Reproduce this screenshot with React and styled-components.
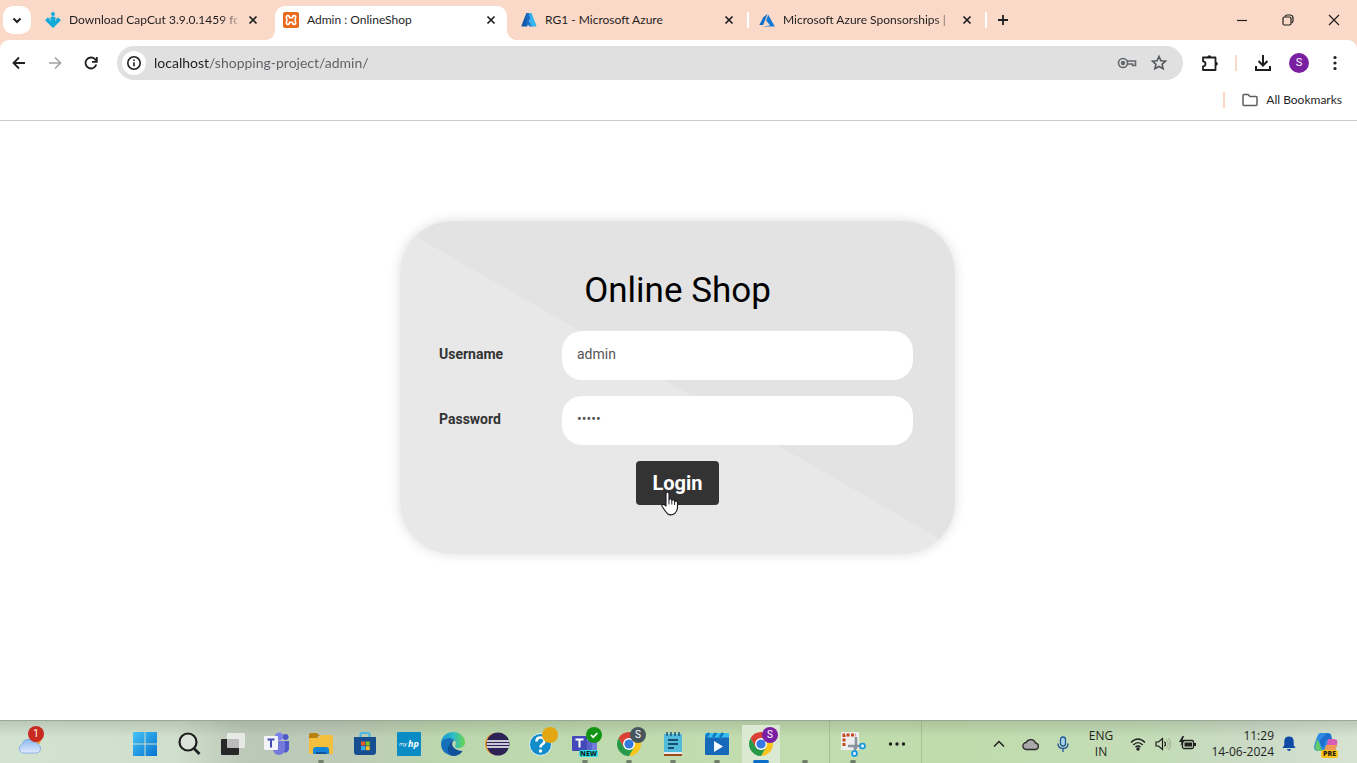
import React from "react";
import styled, { createGlobalStyle, css } from "styled-components";

const PEACH = "#fbd9c8";
const INK = "#1f1f1f";

const GlobalStyle = createGlobalStyle`
  *, *::before, *::after { box-sizing: border-box; }
  body { margin: 0; background: #fff; font-family: "Open Sans", "Liberation Sans", sans-serif; color: ${INK}; }
  button, input { font: inherit; color: inherit; margin: 0; }
  button { border: 0; padding: 0; background: none; cursor: pointer; }
  svg { display: block; flex: none; }
`;

const Screen = styled.div`
  display: flex;
  flex-direction: column;
  min-height: 100vh;
`;

/* ---------- browser tabs ---------- */

const BrowserHeader = styled.header`
  background: ${PEACH};
  font-family: Lato, "Open Sans", sans-serif;
`;

const TabStrip = styled.div`
  display: flex;
  align-items: flex-end;
  height: 40px;
  padding-left: 3px;
`;

const TabSearch = styled.button`
  display: grid;
  place-items: center;
  width: 28px;
  height: 28px;
  margin: 0 3px 6px 0;
  border-radius: 10px;
  background: #fff;
`;

const Tab = styled.div`
  position: relative;
  display: flex;
  align-items: center;
  gap: 8px;
  flex: 0 1 238px;
  min-width: 0;
  height: 34px;
  padding: 0 11px 6px;
  isolation: isolate;

  ${(p) =>
    p.$divided &&
    css`
      &::after {
        content: "";
        position: absolute;
        left: -1px;
        top: 6px;
        width: 2px;
        height: 16px;
        background: #fff;
      }
    `}

  ${(p) =>
    p.$active &&
    css`
      &::before {
        content: "";
        position: absolute;
        z-index: -1;
        inset: 0 -7px;
        background:
          radial-gradient(circle at 0 0, transparent 10px, #fff 10px) left bottom / 10px 10px no-repeat,
          radial-gradient(circle at 100% 0, transparent 10px, #fff 10px) right bottom / 10px 10px no-repeat;
      }
      &::after {
        content: "";
        position: absolute;
        z-index: -1;
        inset: 0 3px;
        border-radius: 10px 10px 0 0;
        background: #fff;
      }
    `}
`;

const TabTitle = styled.span`
  flex: 1;
  min-width: 0;
  overflow: hidden;
  white-space: nowrap;
  font-size: 12px;
  line-height: 16px;
  ${(p) => p.$fade && css`mask-image: linear-gradient(to right, #000 90%, rgba(0, 0, 0, 0.3));`}
`;

const TabClose = styled.button`
  display: grid;
  place-items: center;
  width: 16px;
  height: 16px;
`;

const NewTab = styled.button`
  position: relative;
  display: grid;
  place-items: center;
  width: 34px;
  height: 34px;
  padding-bottom: 6px;
  &::before {
    content: "";
    position: absolute;
    left: -1px;
    top: 6px;
    width: 2px;
    height: 16px;
    background: #fff;
  }
`;

const WindowControls = styled.div`
  display: flex;
  margin-left: auto;
`;

const WindowButton = styled.button`
  display: grid;
  place-items: center;
  width: 46px;
  height: 40px;
`;

/* ---------- toolbar ---------- */

const Toolbar = styled.div`
  display: flex;
  align-items: center;
  gap: 6px;
  padding: 6px 7px 0 4px;
  border-radius: 9px 9px 0 0;
  background: #fff;
`;

const ToolButton = styled.button`
  display: grid;
  place-items: center;
  width: 30px;
  height: 30px;
`;

const AddressBar = styled.div`
  display: flex;
  align-items: center;
  flex: 1;
  min-width: 0;
  height: 34px;
  margin: 0 6px 0 5px;
  padding: 0 8px 0 5px;
  border-radius: 17px;
  background: #e0e0e0;
`;

const SiteInfo = styled.button`
  display: grid;
  place-items: center;
  width: 24px;
  height: 24px;
  margin-right: 8px;
  border-radius: 50%;
  background: #fff;
`;

const AddressInput = styled.input`
  flex: 1;
  min-width: 0;
  height: 24px;
  padding: 0;
  border: 0;
  outline: 0;
  font-size: 14px;
  line-height: 24px;
  color: transparent;
  caret-color: ${INK};
  background: linear-gradient(to right, #1f1f1f 56px, #5a5e63 56px);
  background-clip: text;
`;

const AddressButton = styled.button`
  display: grid;
  place-items: center;
  width: 32px;
  height: 30px;
`;

const Divider = styled.span`
  flex: none;
  width: 2px;
  height: 16px;
  margin: 0 5px 0 4px;
  background: ${PEACH};
`;

const Avatar = styled.span`
  display: grid;
  place-items: center;
  width: 20px;
  height: 20px;
  border-radius: 50%;
  background: #7b1fa2;
  color: #fff;
  font: 11px/20px Roboto, sans-serif;
`;

const BookmarksBar = styled.div`
  display: flex;
  justify-content: flex-end;
  align-items: center;
  gap: 12px;
  height: 41px;
  padding-right: 15px;
  border-bottom: 1px solid #c9c9c9;
  background: #fff;
`;

const BookmarkButton = styled.button`
  display: flex;
  align-items: center;
  gap: 8px;
  font-size: 12px;
  line-height: 16px;
`;

/* ---------- login page ---------- */

const Page = styled.main`
  flex: 1;
  padding: 100px 18px 60px 16px;
  font-family: Roboto, "Liberation Sans", sans-serif;
`;

const LoginCard = styled.section`
  max-width: 555px;
  margin: 0 auto;
  padding: 49px 0;
  border-radius: 52px;
  background: linear-gradient(30deg, #e8e8e8 50%, #e3e3e3 50%);
  box-shadow: 0 0 12px rgba(0, 0, 0, 0.14);
`;

const CardTitle = styled.h1`
  margin: 0 0 20px;
  font-size: 35px;
  font-weight: 400;
  line-height: 41px;
  text-align: center;
  color: #000;
`;

const LoginForm = styled.form`
  display: flex;
  flex-direction: column;
  gap: 16px;
`;

const Field = styled.div`
  display: flex;
  align-items: center;
  padding: 0 42px 0 39px;
`;

const FieldLabel = styled.label`
  flex: none;
  width: 123px;
  padding-bottom: 4px;
  font-size: 14px;
  font-weight: 700;
  color: #333;
`;

const FieldInput = styled.input`
  flex: 1;
  min-width: 0;
  height: 49px;
  padding: 0 15px 4px;
  border: 0;
  border-radius: 20px;
  outline: 0;
  background: #fff;
  font-size: 14px;
  color: #555;
`;

const LoginButton = styled.button`
  position: relative;
  align-self: center;
  height: 44px;
  padding: 0 16px;
  border-radius: 4px;
  background: #333;
  color: #fff;
  font-size: 20px;
  font-weight: 700;
`;

const Pointer = styled.svg`
  position: absolute;
  left: 25px;
  top: 30px;
`;

/* ---------- taskbar ---------- */

const Taskbar = styled.footer`
  display: flex;
  align-items: stretch;
  height: 43px;
  border-top: 1px solid #9aa897;
  background:
    linear-gradient(to bottom, rgba(90, 100, 85, 0.2), transparent 16px),
    linear-gradient(to right, #d3e3d1 0, #d0dfcb 13%, #bcc8b8 18%, #bccbb6 26%, #bcd7ad 33%, #c2dcb0 52%, #c0dcac 70%, #c4dcb8 86%, #cbdbc6 92%, #d6e3d1 100%);
`;

const Weather = styled.button`
  display: grid;
  place-items: center;
  width: 60px;
  margin-right: 63px;
`;

const WeatherFace = styled.span`
  position: relative;
  display: block;
`;

const AppList = styled.nav`
  display: flex;
`;

const AppButton = styled.button`
  position: relative;
  display: grid;
  place-items: center;
  width: 44px;
  padding-top: 4px;
  ${(p) =>
    p.$active &&
    css`
      background: linear-gradient(#dce9d2, #dce9d2) center 4px / 38px 38px no-repeat;
    `}
  ${(p) =>
    (p.$running || p.$active) &&
    css`
      &::after {
        content: "";
        position: absolute;
        bottom: 0;
        left: 50%;
        width: ${p.$active ? 16 : 6}px;
        height: 3px;
        border-radius: 2px;
        transform: translateX(-50%);
        background: ${p.$active ? "#0b6fc9" : "#71806c"};
      }
    `}
`;

const Badge = styled.span`
  position: absolute;
  top: 6px;
  right: 5px;
  display: grid;
  place-items: center;
  width: 16px;
  height: 16px;
  border-radius: 50%;
  background: ${(p) => p.$color};
  color: #fff;
  font: 10px/16px Roboto, sans-serif;
`;

const WeatherBadge = styled(Badge)`
  top: -4px;
  right: -1px;
`;

const NewLabel = styled.span`
  position: absolute;
  right: 9px;
  bottom: 6px;
  padding: 0 1px;
  border-radius: 2px;
  background: #2ce0e6;
  color: #06282b;
  font: 900 7px/7px "Open Sans", sans-serif;
`;

const TaskDivider = styled.span`
  width: 1px;
  margin: 0 1px 0 2px;
  background: rgba(120, 140, 110, 0.35);
`;

const Tray = styled.div`
  display: flex;
  align-items: stretch;
  margin-left: auto;
  padding: 4px 9px 0 0;
  font-size: 12px;
  line-height: 16px;
`;

const TrayButton = styled.button`
  position: relative;
  display: grid;
  place-items: center;
  align-content: center;
  width: ${(p) => p.$width || 32}px;
`;

const Clock = styled(TrayButton)`
  justify-items: end;
  margin-left: 7px;
`;

const PreLabel = styled.span`
  position: absolute;
  right: 10px;
  bottom: 5px;
  padding: 0 2px;
  border-radius: 2px;
  background: #fbc21a;
  color: #2b2410;
  font: 800 7px/8px "Open Sans", sans-serif;
`;

/* ---------- icons ---------- */

const Line = ({ size = 16, box = size, w = 2, color = INK, children, ...rest }) => (
  <svg width={size} height={size} viewBox={`0 0 ${box} ${box}`} fill="none" stroke={color} strokeWidth={w} {...rest}>
    {children}
  </svg>
);

const CloseIcon = () => (
  <Line size={16} w={1.7}><path d="M4.5 4.5l7 7M11.5 4.5l-7 7" /></Line>
);

const CapCutSiteIcon = () => (
  <svg width="16" height="16" viewBox="0 0 16 16" fill="#11aadb">
    <circle cx="8" cy="2" r="2" />
    <path d="M5.500 5.200l2.500-1 2.500 1v4l2.700-2.700L16 8.300 8 16 0 8.300l2.800-1.800 2.700 2.700z" />
    <circle cx="3" cy="7.500" r="1.800" /><circle cx="13" cy="7.500" r="1.800" />
  </svg>
);

const XamppIcon = () => (
  <svg width="16" height="16" viewBox="0 0 16 16">
    <rect width="16" height="16" rx="2" fill="#ea6a1c" />
    <path d="M5 3.600c-1.500 0-2 1-1.600 2.200L4 8l-.6 2.200C3 11.500 3.500 12.400 5 12.400s1.600-1 1.600-2.200h2.800c0 1.200.1 2.200 1.600 2.200s2-.9 1.600-2.200L12 8l.6-2.200c.4-1.200-.1-2.200-1.600-2.200S9.400 4.600 9.400 5.800H6.600C6.600 4.600 6.500 3.600 5 3.600z" fill="none" stroke="#fff" strokeWidth="1.600" />
  </svg>
);

const AzureIcon = () => (
  <svg width="16" height="16" viewBox="0 0 16 16">
    <path d="M5.400 1h4.400L5.200 14.600H1.200c-.6 0-.9-.5-.7-1z" fill="#1158a7" />
    <path d="M4.300 9.800h7l1 4.800H8.600z" fill="#0f78d4" />
    <path d="M6.300 1h4.200l4.900 12.600c.2.500-.2 1-.7 1h-4.300L8 7.500z" fill="#36b4ee" />
    <path d="M5.400 1h2.200l1.600 5-2.900 8.600H5z" fill="#1b6cc4" />
  </svg>
);

const AzureClassicIcon = () => (
  <svg width="16" height="16" viewBox="0 0 16 16">
    <path d="M8.600 1.700L4.400 5.200.3 12.900h3.800z" fill="#0a6ccb" />
    <path d="M9.200 2.700L7.100 8.500l4 5L3.300 14.500h12.500z" fill="#1279d6" />
  </svg>
);

const PuzzleIcon = () => (
  <svg width="18" height="18" viewBox="0 0 18 18">
    <path d="M2 3.500h12.500V16H2v-3.700a2.400 2.400 0 0 0 0-5z" fill="none" stroke={INK} strokeWidth="1.800" strokeLinejoin="round" />
    <path d="M6.300 3.300a2 2 0 0 1 4 0zM14.800 7.800a2 2 0 0 1 0 4z" fill={INK} />
  </svg>
);

const ChromeIcon = () => (
  <svg width="24" height="24" viewBox="0 0 24 24">
    <path d="M12 6h10.390A12 12 0 0 1 12 24l5.200-9z" fill="#f9c51d" />
    <path d="M6.800 15L1.610 6A12 12 0 0 0 12 24l5.200-9z" fill="#269a49" />
    <path d="M12 6h10.390A12 12 0 0 0 1.610 6L6.800 15z" fill="#dc3f34" />
    <circle cx="12" cy="12" r="6" fill="#fff" />
    <circle cx="12" cy="12" r="4.600" fill="#3478e0" />
  </svg>
);

const WindowsIcon = () => (
  <svg width="24" height="24" viewBox="0 0 24 24">
    <defs>
      <linearGradient id="win" x1="0" y1="0" x2="1" y2="1">
        <stop offset="0" stopColor="#45c3f7" />
        <stop offset="1" stopColor="#0673d0" />
      </linearGradient>
    </defs>
    <path d="M0 0h11.500v11.500H0zM12.500 0H24v11.500H12.500zM0 12.500h11.500V24H0zM12.500 12.500H24V24H12.500z" fill="url(#win)" />
  </svg>
);

const SearchIcon = () => (
  <Line size={24} w={2.200}><circle cx="11" cy="10" r="8.500" fill="#e4e9e2" fillOpacity=".6" /><path d="M17 16.500l5.500 5.500" strokeWidth="2.600" /></Line>
);

const TaskViewIcon = () => (
  <svg width="24" height="24" viewBox="0 0 24 24">
    <rect x="0" y="7" width="18" height="16" rx="1" fill="#272727" />
    <rect x="6" y="1" width="18" height="15" rx="1" fill="#f5f5f5" fillOpacity=".72" />
  </svg>
);

const TeamsIcon = () => (
  <svg width="26" height="24" viewBox="0 0 26 24">
    <circle cx="21.500" cy="5" r="3" fill="#5059c9" />
    <circle cx="15" cy="4.500" r="4" fill="#7b83eb" />
    <path d="M17 9h8v8a4 4 0 0 1-6 3z" fill="#5059c9" />
    <path d="M9 9h12v8a6 6 0 0 1-12 0z" fill="#7479dc" />
    <rect x="0" y="4" width="14" height="14" rx="1" fill="#f3f3fa" />
    <path d="M3.500 7.500h7M7 7.500v8" stroke="#444bb8" strokeWidth="2" />
  </svg>
);

const TeamsNewIcon = () => (
  <svg width="26" height="24" viewBox="0 0 26 24">
    <path d="M10 8h15v8a6 6 0 0 1-10 5z" fill="#7479dc" />
    <path d="M9 9h11v8a6 6 0 0 1-11 2z" fill="#5a60cc" />
    <rect x="0" y="4" width="15" height="15" rx="1" fill="#444bb8" />
    <path d="M3.500 7.500h8M7.500 7.500v8" stroke="#fff" strokeWidth="2" />
  </svg>
);

const FolderIcon = () => (
  <svg width="26" height="24" viewBox="0 0 26 24">
    <path d="M1 2.500Q1 1 2.500 1H9l3 3h-2l-1 4H1z" fill="#b8810e" />
    <path d="M1 6h9l3-3h11q1 0 1 1.500V22H1z" fill="#f3bf3c" />
    <path d="M5 22v-4q0-3 3-3h10q3 0 3 3v4z" fill="#1684d6" />
    <path d="M8 22v-2h10v2z" fill="#0b559d" />
  </svg>
);

const StoreIcon = () => (
  <svg width="24" height="24" viewBox="0 0 24 24">
    <path d="M7.500 7V2.500Q7.500 1 9 1h6q1.500 0 1.500 1.500V7" fill="none" stroke="#49b8e5" strokeWidth="2" />
    <path d="M1 5h22v15q0 3-3 3H4q-3 0-3-3z" fill="#164e8f" />
    <path d="M8 9.500h4v4H8z" fill="#ef5a2c" /><path d="M12.700 9.500h4v4h-4z" fill="#86c423" />
    <path d="M8 14.200h4v4H8z" fill="#35b3ee" /><path d="M12.700 14.200h4v4h-4z" fill="#fbc123" />
  </svg>
);

const MyHpIcon = () => (
  <svg width="24" height="24" viewBox="0 0 24 24">
    <rect width="24" height="24" rx="1" fill="#098cc4" />
    <text x="2" y="14" fontSize="6" fontStyle="italic" fontFamily="Open Sans, sans-serif" fill="#fff">my</text>
    <text x="11" y="15" fontSize="9" fontWeight="700" fontStyle="italic" fontFamily="Open Sans, sans-serif" fill="#fff">hp</text>
  </svg>
);

const EdgeIcon = () => (
  <svg width="24" height="24" viewBox="0 0 24 24">
    <defs>
      <linearGradient id="edgeTop" x1="0" x2="1">
        <stop offset="0" stopColor="#1695da" />
        <stop offset=".55" stopColor="#31bfc1" />
        <stop offset="1" stopColor="#67d34c" />
      </linearGradient>
    </defs>
    <path d="M0 12C0 5 5 0 12 0s12 5 12 10c0 4-3 6-6 6-4 0-4.500-1.800-3.500-3C16 10 13 6 8.500 6 4 6 1 9 0 12z" fill="url(#edgeTop)" />
    <path d="M0 12c1-4 4-6 8.500-6 2 0 4.500 1 5.500 3-4-1-6 1.500-6 4.500 0 5 6 8 13.500 5.500A12 12 0 0 1 0 12z" fill="#1470bd" />
    <path d="M8 13.500C8 10.500 10 8.500 12.500 9c-3 2-1.500 9.500 9 10-3 5-9 5.500-11.500 4.500C7 21 5.500 17 8 13.500z" fill="#12509a" />
  </svg>
);

const EclipseIcon = () => (
  <svg width="26" height="24" viewBox="0 0 26 24">
    <circle cx="12" cy="12" r="11" fill="#ef9a2b" />
    <circle cx="14" cy="12" r="11.500" fill="#2c2255" />
    <path d="M3 9h22M3 12h22M3 15h22" stroke="#fff" strokeWidth="1.700" />
  </svg>
);

const HelpIcon = () => (
  <svg width="26" height="24" viewBox="0 0 26 24">
    <circle cx="12.500" cy="12.500" r="11" fill="#118dc9" stroke="#e9f4f5" />
    <path d="M8.500 9.500q0-4 4-4t4 3.500q0 2-2.500 3.500-1.500 1-1.500 3" fill="none" stroke="#fff" strokeWidth="2.600" />
    <circle cx="12.500" cy="19" r="1.700" fill="#fff" />
  </svg>
);

const NotepadIcon = () => (
  <svg width="20" height="24" viewBox="0 0 20 24">
    <rect x="1" y="2" width="18" height="20" fill="#52bbdd" />
    <path d="M4 0v4M8 0v4M12 0v4M16 0v4" stroke="#1c5f7e" strokeWidth="1.600" />
    <path d="M5 8h10M5 12h10M5 16h6" stroke="#17516e" strokeWidth="1.800" />
    <path d="M1 20h18v2H1z" fill="#e9e9e9" /><path d="M1 22h18v2H1z" fill="#9b4b1c" />
  </svg>
);

const VideoIcon = () => (
  <svg width="26" height="24" viewBox="0 0 26 24">
    <path d="M1 1h24v8H1z" fill="#37bdf0" />
    <path d="M5 1L2 5M12 1L9 5M19 1l-3 4" stroke="#1073bd" strokeWidth="2.500" />
    <path d="M1 5.500h24V22q0 1-1 1H2q-1 0-1-1z" fill="#1669b8" />
    <path d="M10 9l9 5.500L10 20z" fill="#f4faff" />
  </svg>
);

const SnipIcon = () => (
  <svg width="26" height="26" viewBox="0 0 26 26">
    <rect x="1" y="1" width="18" height="18" rx="1" fill="#eceef0" />
    <path d="M4 15V4h12" fill="none" stroke="#c1491b" strokeWidth="3" strokeDasharray="3 1.500" />
    <path d="M16 6v12M8 15h13M15 15v6" fill="none" stroke="#8b939a" strokeWidth="2.600" />
    <circle cx="22.500" cy="15" r="2.500" fill="#cfeafc" stroke="#1597dd" strokeWidth="1.700" />
    <circle cx="14.500" cy="22.500" r="2.500" fill="#cfeafc" stroke="#1597dd" strokeWidth="1.700" />
  </svg>
);

const WeatherIcon = () => (
  <svg width="26" height="24" viewBox="0 0 26 24">
    <defs>
      <linearGradient id="cloud" x1="0" y1="0" x2="0" y2="1">
        <stop offset="0" stopColor="#8fb9ef" />
        <stop offset="1" stopColor="#dfeafb" />
      </linearGradient>
    </defs>
    <circle cx="19" cy="10" r="5" fill="#f19b2c" />
    <path d="M5.500 23a4.500 4.500 0 0 1-.5-8.500A6 6 0 0 1 16 12q6 0 7.500 6 0 5-4.500 5z" fill="url(#cloud)" stroke="#7ba6e6" strokeWidth=".8" />
  </svg>
);

const CopilotIcon = () => (
  <svg width="24" height="24" viewBox="0 0 24 24">
    <path d="M6 1h8q3 0 3.500 3L14 16q-1 3-4 3H4q-4 0-4-4Q2 6 4 3q1-2 2-2z" fill="#2d8ce2" />
    <path d="M3 7L1 15q0 4 4 4h5q-4-2-4-7z" fill="#65c86a" />
    <path d="M14 7h6q3.500 0 3.500 3.500-1 5-3 8.500-1 2-3 2h-6z" fill="#d65fb7" />
    <path d="M13 1q4 0 5 6h-3q-3 0-4 4l-1 4Q5 13 6 8z" fill="#1d6ed0" />
    <path d="M12 13h11l-2 6q-1 3-4 3H9z" fill="#f09b55" />
  </svg>
);

const DotsIcon = () => (
  <svg width="18" height="6" viewBox="0 0 18 6" fill={INK}>
    <circle cx="2.500" cy="3" r="1.700" /><circle cx="9" cy="3" r="1.700" /><circle cx="15.500" cy="3" r="1.700" />
  </svg>
);

const tabs = [
  { title: "Download CapCut 3.9.0.1459 fo", icon: CapCutSiteIcon, fade: true },
  { title: "Admin : OnlineShop", icon: XamppIcon, active: true },
  { title: "RG1 - Microsoft Azure", icon: AzureIcon },
  { title: "Microsoft Azure Sponsorships |", icon: AzureClassicIcon, divided: true, fade: true },
];

const apps = [
  { name: "Start", icon: WindowsIcon },
  { name: "Search", icon: SearchIcon },
  { name: "Task view", icon: TaskViewIcon },
  { name: "Teams", icon: TeamsIcon },
  { name: "File Explorer", icon: FolderIcon, running: true },
  { name: "Store", icon: StoreIcon },
  { name: "myHP", icon: MyHpIcon },
  { name: "Edge", icon: EdgeIcon },
  { name: "Eclipse", icon: EclipseIcon },
  { name: "Help", icon: HelpIcon, badge: { color: "#e2a713" } },
  { name: "Teams work", icon: TeamsNewIcon, running: true, isNew: true, badge: { color: "#139313", check: true } },
  { name: "Chrome", icon: ChromeIcon, running: true, badge: { color: "#47545c", text: "S" } },
  { name: "Notepad", icon: NotepadIcon, running: true },
  { name: "Movies", icon: VideoIcon, running: true },
  { name: "Chrome profile", icon: ChromeIcon, active: true, badge: { color: "#7b1fa2", text: "S" } },
  { name: "Background app", running: true },
];

function App() {
  return (
    <Screen>
      <GlobalStyle />
      <BrowserHeader>
        <TabStrip>
          <TabSearch aria-label="Search tabs">
            <Line size={12} w={2}><path d="M2.500 4.500L6 8l3.500-3.500" /></Line>
          </TabSearch>
          {tabs.map(({ title, icon: Icon, active, divided, fade }) => (
            <Tab key={title} $active={active} $divided={divided}>
              <Icon />
              <TabTitle $fade={fade}>{title}</TabTitle>
              <TabClose aria-label={`Close ${title}`}><CloseIcon /></TabClose>
            </Tab>
          ))}
          <NewTab aria-label="New tab">
            <Line size={12} w={1.800}><path d="M6 1v10M1 6h10" /></Line>
          </NewTab>
          <WindowControls>
            <WindowButton aria-label="Minimize"><Line size={12} w={1.200}><path d="M1 6.500h10" /></Line></WindowButton>
            <WindowButton aria-label="Restore">
              <Line size={12} w={1.200}>
                <rect x="1" y="3" width="8" height="8" rx="1.500" />
                <path d="M3 2.500Q3.500 1 5 1h3q3 0 3 3v3q0 1.500-1.500 2" />
              </Line>
            </WindowButton>
            <WindowButton aria-label="Close window"><Line size={12} w={1.200}><path d="M1 1l10 10M11 1L1 11" /></Line></WindowButton>
          </WindowControls>
        </TabStrip>
        <Toolbar>
          <ToolButton aria-label="Back"><Line w={1.800}><path d="M14 8H3M8 2.500L2.500 8 8 13.500" /></Line></ToolButton>
          <ToolButton aria-label="Forward"><Line w={1.600} color="#a3a3a3"><path d="M2 8h11M8 2.500L13.500 8 8 13.500" /></Line></ToolButton>
          <ToolButton aria-label="Reload">
            <Line w={1.800}><path d="M13.300 9.500A5.500 5.500 0 1 1 12 4.200L13.500 6" /><path d="M13.800 2v4.800H9" /></Line>
          </ToolButton>
          <AddressBar>
            <SiteInfo aria-label="Site information">
              <Line w={1.600}><circle cx="8" cy="8" r="6.200" /><path d="M8 7.200v4M8 4.400v1.700" /></Line>
            </SiteInfo>
            <AddressInput aria-label="Address" defaultValue="localhost/shopping-project/admin/" spellCheck={false} />
            <AddressButton aria-label="Saved passwords">
              <Line size={20} w={1.600} color="#63676b">
                <circle cx="6" cy="10" r="4.500" /><circle cx="6" cy="10" r="1.400" fill="#63676b" />
                <path d="M10 8h8.500v4.500h-3V11H10.500" />
              </Line>
            </AddressButton>
            <AddressButton aria-label="Bookmark this page">
              <Line size={18} w={1.600} color="#55595d">
                <path d="M9 2.500l1.900 4.200 4.600.5-3.400 3.100 1 4.500L9 12.500l-4.100 2.300 1-4.500-3.400-3.100 4.600-.5z" />
              </Line>
            </AddressButton>
          </AddressBar>
          <ToolButton aria-label="Extensions"><PuzzleIcon /></ToolButton>
          <Divider />
          <ToolButton aria-label="Downloads">
            <Line size={18} w={2}><path d="M9 1v10M4.500 7L9 11.500 13.500 7M2 12v4h14v-4" /></Line>
          </ToolButton>
          <ToolButton aria-label="Profile"><Avatar>S</Avatar></ToolButton>
          <ToolButton aria-label="Menu">
            <svg width="4" height="16" viewBox="0 0 4 16" fill={INK}>
              <circle cx="2" cy="2.500" r="1.600" /><circle cx="2" cy="8" r="1.600" /><circle cx="2" cy="13.500" r="1.600" />
            </svg>
          </ToolButton>
        </Toolbar>
        <BookmarksBar>
          <Divider />
          <BookmarkButton>
            <Line w={1.500} color="#5a5d61"><path d="M1 12.500V3.500q0-1 1-1h4l2 2h6q1 0 1 1v7q0 1-1 1H2q-1 0-1-1z" /></Line>
            All Bookmarks
          </BookmarkButton>
        </BookmarksBar>
      </BrowserHeader>

      <Page>
        <LoginCard>
          <CardTitle>Online Shop</CardTitle>
          <LoginForm onSubmit={(e) => e.preventDefault()}>
            <Field>
              <FieldLabel htmlFor="username">Username</FieldLabel>
              <FieldInput id="username" type="text" defaultValue="admin" />
            </Field>
            <Field>
              <FieldLabel htmlFor="password">Password</FieldLabel>
              <FieldInput id="password" type="password" defaultValue="admin" />
            </Field>
            <LoginButton type="submit">
              Login
              <Pointer width="18" height="25" viewBox="0 0 18 25">
                <path d="M5 2.500Q5 1 6.500 1T8 2.500V9q.2-1.200 1.400-1.200T10.800 9v.8q.2-1 1.400-1t1.400 1.200v.8q.2-.9 1.400-.9t1.500 1.300v4.500q0 4-2.500 6.500-4 3-7.500.5Q4 20 1.200 15.500q-.8-1.500.4-2T5 15z" fill="#fff" stroke="#16161f" strokeWidth="1.100" strokeLinejoin="round" />
                <path d="M8 9v4.500M10.800 10v3.500M13.600 11v3" stroke="#16161f" strokeWidth=".9" />
              </Pointer>
            </LoginButton>
          </LoginForm>
        </LoginCard>
      </Page>

      <Taskbar>
        <Weather aria-label="Weather">
          <WeatherFace>
            <WeatherIcon />
            <WeatherBadge $color="#c92a20">1</WeatherBadge>
          </WeatherFace>
        </Weather>
        <AppList aria-label="Apps">
          {apps.map(({ name, icon: Icon, badge, running, active, isNew }) => (
            <AppButton key={name} aria-label={name} $running={running} $active={active}>
              {Icon && <Icon />}
              {isNew && <NewLabel>NEW</NewLabel>}
              {badge && (
                <Badge $color={badge.color}>
                  {badge.check ? <Line size={10} w={1.800} color="#fff"><path d="M2 5l2.200 2.300L8.300 3" /></Line> : badge.text}
                </Badge>
              )}
            </AppButton>
          ))}
          <TaskDivider />
          <AppButton aria-label="Snipping Tool" $running><SnipIcon /></AppButton>
          <AppButton aria-label="More apps"><DotsIcon /></AppButton>
          <TaskDivider />
        </AppList>
        <Tray>
          <TrayButton aria-label="Hidden icons"><Line size={12} w={1.500}><path d="M1 8.500l5-5 5 5" /></Line></TrayButton>
          <TrayButton aria-label="OneDrive">
            <svg width="18" height="14" viewBox="0 0 18 14">
              <path d="M4.500 12.500a3.500 3.500 0 0 1-.3-7A5 5 0 0 1 13.500 6a3.300 3.300 0 0 1 .3 6.500z" fill="#a9a9ab" stroke="#2b2b2b" strokeWidth="1.300" />
            </svg>
          </TrayButton>
          <TrayButton aria-label="Microphone">
            <Line w={1.300} color="#1c5494"><rect x="5.500" y="1" width="5" height="9" rx="2.500" fill="#a9d4ea" /><path d="M3 7.500q0 5 5 5t5-5M8 12.500V16" /></Line>
          </TrayButton>
          <TrayButton $width={44} aria-label="Input language"><span>ENG</span><span>IN</span></TrayButton>
          <TrayButton aria-label="Network" $width={30}>
            <Line w={1.400}><path d="M1 6.500q7-7 14 0M3.300 9q4.700-4.700 9.400 0M5.500 11.300q2.500-2.400 5 0" /><circle cx="8" cy="13" r="1" fill={INK} /></Line>
          </TrayButton>
          <TrayButton aria-label="Volume" $width={20}>
            <Line w={1.200}><path d="M1 6h2.500L7.500 2.500v11L3.500 10H1z" /><path d="M9.500 5.500q2 2.500 0 5" /><path d="M11.500 3.500q3.500 4.500 0 9M13.500 2q4 6 0 12" stroke="#9aa592" strokeWidth=".9" /></Line>
          </TrayButton>
          <TrayButton aria-label="Battery" $width={28}>
            <svg width="17" height="16" viewBox="0 0 17 16">
              <rect x="3.500" y="4.500" width="11" height="8" rx="1.500" fill="none" stroke={INK} strokeWidth="1.300" />
              <path d="M5.500 6.500H13v4H5.500z" fill={INK} /><path d="M15 7h2v3h-2z" fill={INK} />
              <path d="M3.500 0L0 6h2.500L1.500 10 6 4.500H3.500L5 0z" fill={INK} />
            </svg>
          </TrayButton>
          <Clock $width={66} aria-label="Clock"><span>11:29</span><span>14-06-2024</span></Clock>
          <TrayButton aria-label="Notifications" $width={30}>
            <svg width="14" height="16" viewBox="0 0 14 16" fill="#0f4ba5">
              <path d="M7 .5q4.700 0 4.700 5V9l1.800 3H.5l1.800-3V5.500q0-5 4.700-5z" /><path d="M5 13h4q-.3 2-2 2t-2-2z" />
            </svg>
          </TrayButton>
          <TrayButton aria-label="Copilot" $width={44}><CopilotIcon /><PreLabel>PRE</PreLabel></TrayButton>
        </Tray>
      </Taskbar>
    </Screen>
  );
}

export default App;
